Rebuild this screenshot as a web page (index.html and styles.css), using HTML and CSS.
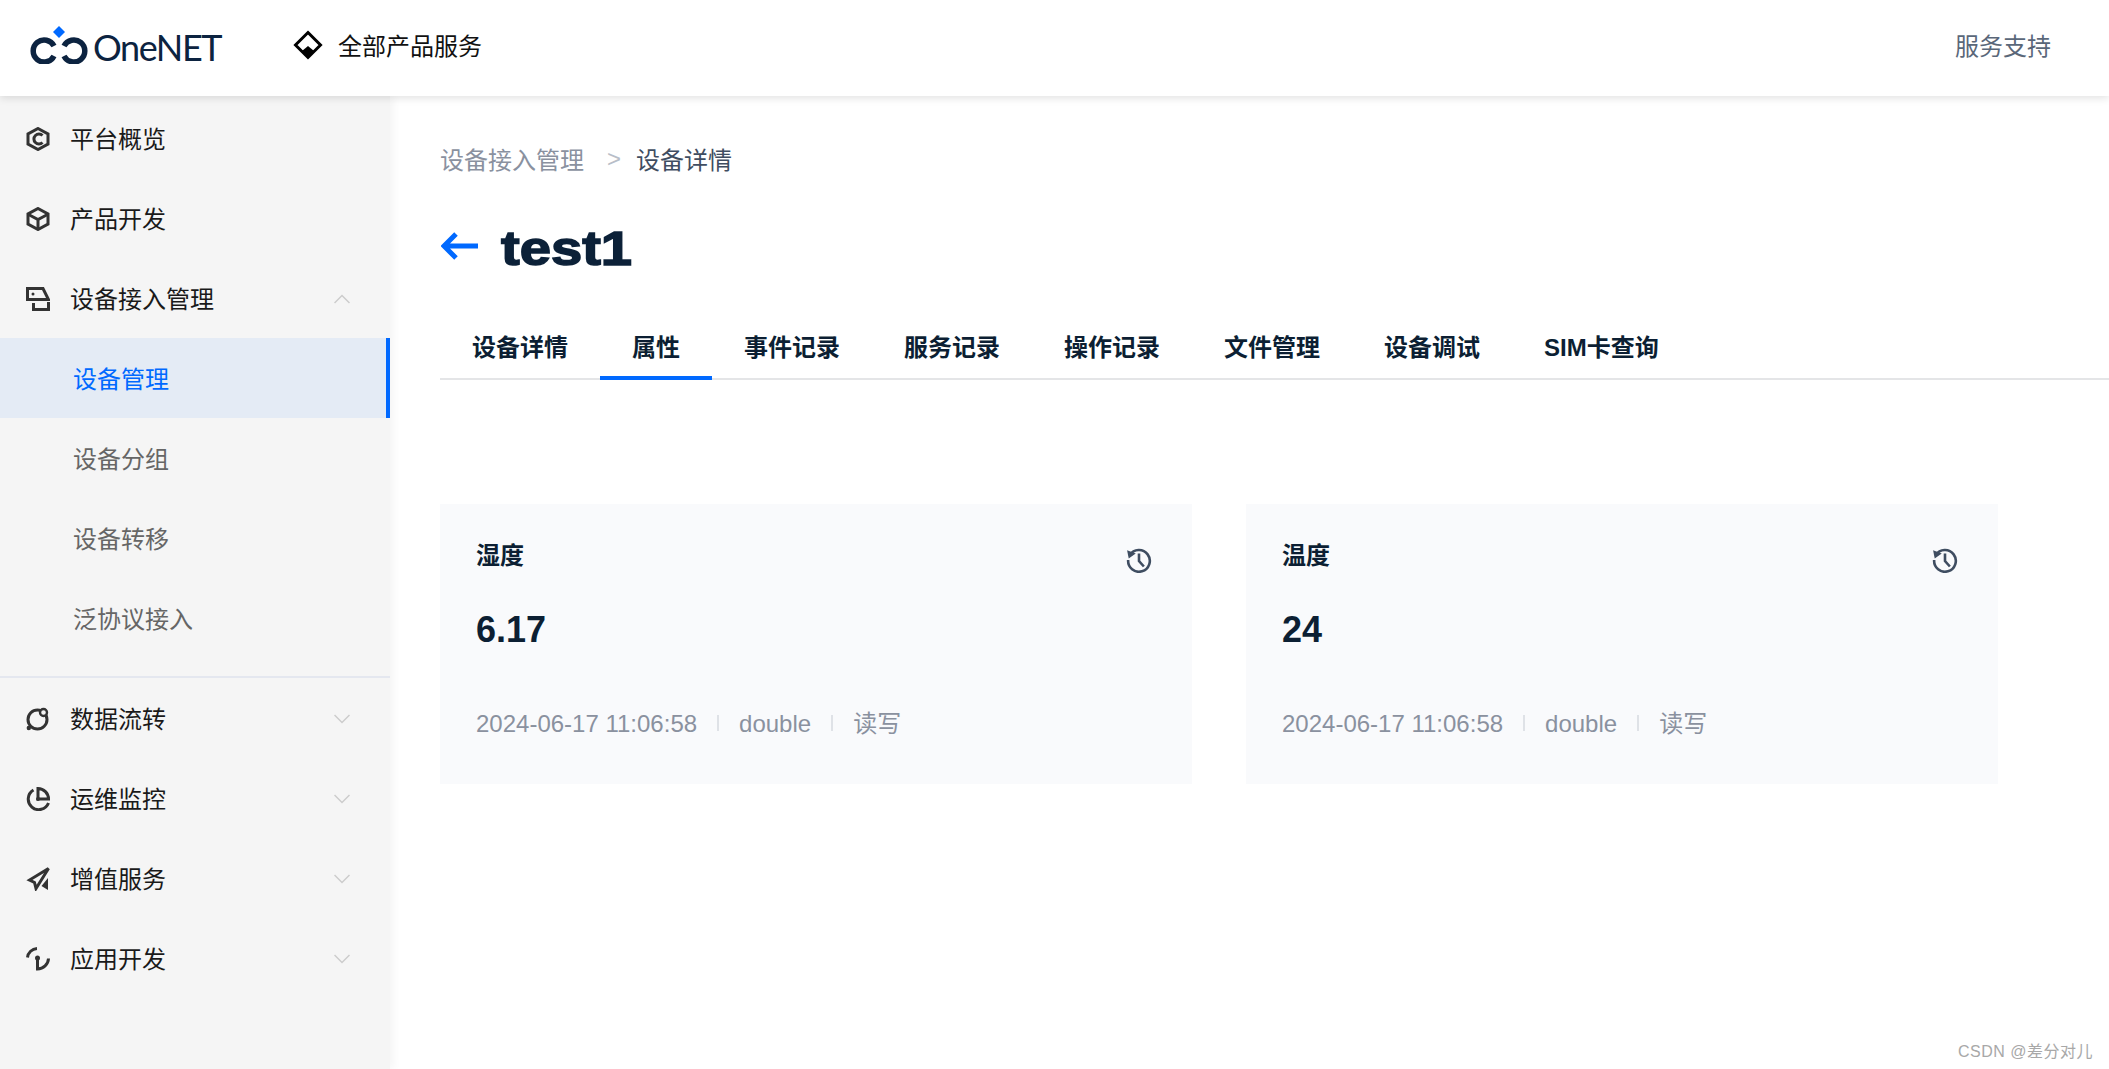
FILE: index.html
```html
<!DOCTYPE html>
<html lang="zh-CN">
<head>
    <meta charset="UTF-8">
    <title>OneNET 设备详情</title>
    <link rel="stylesheet" href="styles.css">
</head>
<body>
    <header class="topbar">
        <div class="logo">
            <svg class="logo-mark" viewBox="0 0 58 38" width="58" height="38">
                <path class="logo-blue" d="M29 0l6 6-6 6-6-6z"/>
                <path class="logo-ring" d="M24 20a11 11 0 1 0 0 10"/>
                <path class="logo-ring" d="M34 20a11 11 0 1 1 0 10"/>
            </svg>
            <span class="logo-text">OneNET</span>
        </div>
        <div class="all-products">
            <svg viewBox="0 0 30 30" width="30" height="30">
                <path class="diamond" d="M15 2.500L27.500 15 15 27.500 2.500 15z"/>
                <path d="M9 21l6-5 6 5-6 6.500z"/>
            </svg>
            <span>全部产品服务</span>
        </div>
        <a class="support">服务支持</a>
    </header>

    <div class="layout">
        <nav class="sidebar">
            <div class="nav-group">
                <div class="nav-item">
                    <svg class="nav-icon" viewBox="0 0 24 24"><path d="M12 1.500l10 5.500v10l-10 5.500-10-5.500V7z"/><path d="M16.500 8.500a5 5 0 1 0 0 7" /></svg>
                    <span>平台概览</span>
                </div>
                <div class="nav-item">
                    <svg class="nav-icon" viewBox="0 0 24 24"><path d="M12 1.500l10 5.500v10l-10 5.500-10-5.500V7z"/><path d="M2.500 7.500L12 12.500l9.500-5M12 12.500V22"/></svg>
                    <span>产品开发</span>
                </div>
                <div class="nav-item">
                    <svg class="nav-icon" viewBox="0 0 24 24"><path d="M1.500 12.500V1.500H17l5.500 11z"/><path d="M7.500 16v6.500h15V15"/><circle class="fill" cx="7" cy="7" r="1.500"/></svg>
                    <span>设备接入管理</span>
                    <svg class="chevron" viewBox="0 0 16 10"><path d="M.5 9L8 1.500 15.500 9"/></svg>
                </div>
                <div class="sub-item active">设备管理</div>
                <div class="sub-item">设备分组</div>
                <div class="sub-item">设备转移</div>
                <div class="sub-item">泛协议接入</div>
            </div>
            <div class="nav-group">
                <div class="nav-item">
                    <svg class="nav-icon" viewBox="0 0 24 24"><circle cx="11.500" cy="12.500" r="9.500"/><circle class="spot" cx="17.500" cy="5.500" r="3.500"/><circle class="fill" cx="2.800" cy="21" r="2.200"/></svg>
                    <span>数据流转</span>
                    <svg class="chevron" viewBox="0 0 16 10"><path d="M.5 1L8 8.500 15.500 1"/></svg>
                </div>
                <div class="nav-item">
                    <svg class="nav-icon" viewBox="0 0 24 24"><path d="M7.500 3A10.500 10.500 0 1 0 22.500 16"/><path d="M12 12V1.500A10.500 10.500 0 0 1 22.500 12z"/><circle class="fill" cx="12" cy="12" r="2"/></svg>
                    <span>运维监控</span>
                    <svg class="chevron" viewBox="0 0 16 10"><path d="M.5 1L8 8.500 15.500 1"/></svg>
                </div>
                <div class="nav-item">
                    <svg class="nav-icon" viewBox="0 0 24 24"><path d="M22.500 1.500L3.500 13l5 2.500 1.500 6z"/><path class="fill" d="M22 11v12l-6.500-4z"/></svg>
                    <span>增值服务</span>
                    <svg class="chevron" viewBox="0 0 16 10"><path d="M.5 1L8 8.500 15.500 1"/></svg>
                </div>
                <div class="nav-item">
                    <svg class="nav-icon" viewBox="0 0 24 24"><path d="M1.500 10.500a10 10 0 0 1 9.500-9"/><path d="M11.500 12v10a11 11 0 0 0 11-10.500"/><circle class="fill" cx="11.500" cy="11" r="2.500"/></svg>
                    <span>应用开发</span>
                    <svg class="chevron" viewBox="0 0 16 10"><path d="M.5 1L8 8.500 15.500 1"/></svg>
                </div>
            </div>
        </nav>

        <main class="content">
            <div class="breadcrumb">
                <span class="crumb">设备接入管理</span>
                <span class="crumb-sep">&gt;</span>
                <span class="crumb-now">设备详情</span>
            </div>
            <div class="title-row">
                <svg class="back" viewBox="0 0 38 28" width="38" height="28"><path d="M37 14H3M15 2L3 14l12 12"/></svg>
                <h1>test1</h1>
            </div>
            <div class="tabs">
                <div class="tab">设备详情</div>
                <div class="tab active">属性</div>
                <div class="tab">事件记录</div>
                <div class="tab">服务记录</div>
                <div class="tab">操作记录</div>
                <div class="tab">文件管理</div>
                <div class="tab">设备调试</div>
                <div class="tab">SIM卡查询</div>
            </div>
            <div class="cards">
                <div class="card">
                    <div class="card-head">
                        <span class="card-name">湿度</span>
                        <svg class="history" viewBox="0 0 24 24"><path d="M3.500 7.500A10 10 0 1 1 2 12"/><path class="fill" d="M1 3l8 3-6.500 4.500z"/><path d="M12 6v7l4.500 5"/></svg>
                    </div>
                    <div class="card-value">6.17</div>
                    <div class="card-meta">
                        <span>2024-06-17 11:06:58</span><i></i><span>double</span><i></i><span>读写</span>
                    </div>
                </div>
                <div class="card">
                    <div class="card-head">
                        <span class="card-name">温度</span>
                        <svg class="history" viewBox="0 0 24 24"><path d="M3.500 7.500A10 10 0 1 1 2 12"/><path class="fill" d="M1 3l8 3-6.500 4.500z"/><path d="M12 6v7l4.500 5"/></svg>
                    </div>
                    <div class="card-value">24</div>
                    <div class="card-meta">
                        <span>2024-06-17 11:06:58</span><i></i><span>double</span><i></i><span>读写</span>
                    </div>
                </div>
            </div>
        </main>
    </div>

    <div class="watermark">CSDN @差分对儿</div>
</body>
</html>
```

FILE: styles.css
```css
* {
    box-sizing: border-box;
}
body {
    margin: 0;
    height: 1069px;
    overflow: hidden;
    background: #ffffff;
    font-family: "Liberation Sans", "Noto Sans CJK SC", sans-serif;
    font-size: 24px;
    color: #0c1f33;
}
.topbar {
    position: relative;
    z-index: 2;
    display: flex;
    align-items: center;
    height: 96px;
    padding: 0 58px 7px 30px;
    background: #ffffff;
    box-shadow: 0 2px 8px rgba(0, 0, 0, 0.12);
}
.logo {
    display: flex;
    align-items: center;
    width: 263px;
}
.logo-blue {
    fill: #0069ff;
}
.logo-ring {
    fill: none;
    stroke: #0c2340;
    stroke-width: 5.500;
}
.logo-text {
    margin: 4px 0 0 5px;
    font-family: "Lato", sans-serif;
    font-size: 36px;
    letter-spacing: -1.400px;
    color: #0c2340;
}
.all-products {
    display: flex;
    align-items: center;
    gap: 15px;
    color: #111111;
}
.diamond {
    fill: none;
    stroke: #000000;
    stroke-width: 3;
}
.support {
    margin-left: auto;
    color: #5a6779;
}
.layout {
    display: flex;
    height: 973px;
}
.sidebar {
    flex: none;
    width: 390px;
    padding-top: 2px;
    background: #f5f5f5;
    box-shadow: 4px 0 8px rgba(0, 0, 0, 0.04);
}
.nav-group + .nav-group {
    margin-top: 18px;
    border-top: 2px solid #e4e7ef;
}
.nav-item {
    display: flex;
    align-items: center;
    height: 80px;
    padding: 2px 40px 0 26px;
    color: #1a1a1a;
}
.nav-item span {
    margin-bottom: 3px;
}
.nav-icon {
    flex: none;
    width: 24px;
    height: 24px;
    margin-right: 20px;
    fill: none;
    stroke: #333333;
    stroke-width: 3;
}
.nav-icon .fill {
    fill: #333333;
    stroke: none;
}
.nav-icon .spot {
    fill: #f5f5f5;
    stroke-width: 2.400;
}
.chevron {
    width: 16px;
    height: 10px;
    margin-left: auto;
    fill: none;
    stroke: #cccccc;
    stroke-width: 1.500;
}
.sub-item {
    height: 80px;
    padding-left: 73px;
    line-height: 84px;
    color: #666666;
}
.sub-item.active {
    border-right: 4px solid #0069ff;
    background: #e4ebf5;
    color: #0069ff;
}
.content {
    flex: 1;
    padding: 46px 0 0 50px;
}
.breadcrumb {
    display: flex;
    align-items: center;
    height: 32px;
}
.crumb {
    color: #8a919f;
}
.crumb-sep {
    margin: 2px 15px 0 23px;
    color: #b8bec8;
}
.crumb-now {
    color: #3f4d61;
}
.title-row {
    display: flex;
    align-items: center;
    height: 60px;
    margin-top: 44px;
}
.back {
    margin: 0 0 4px 1px;
    fill: none;
    stroke: #0069ff;
    stroke-width: 5;
}
h1 {
    margin: 0 0 0 22px;
    font-size: 48px;
    font-weight: bold;
    color: #0c2138;
    -webkit-text-stroke: 1.500px #0c2138;
    transform: scaleX(1.170);
    transform-origin: left center;
}
.tabs {
    display: flex;
    height: 64px;
    margin-top: 38px;
    border-bottom: 2px solid #e4e5e7;
}
.tab {
    height: 64px;
    padding: 0 32px;
    line-height: 64px;
    font-weight: bold;
    color: #0c1f33;
}
.tab.active {
    border-bottom: 4px solid #0069ff;
}
.cards {
    display: flex;
    gap: 54px;
    margin-top: 124px;
}
.card {
    width: 752px;
    height: 280px;
    padding: 36px 36px 0;
    background: #f9fafc;
}
.card-head {
    display: flex;
    justify-content: space-between;
    height: 32px;
}
.card-name {
    line-height: 32px;
    font-weight: bold;
    color: #0c1f33;
}
.history {
    width: 26px;
    height: 26px;
    margin: 7px 4px 0 0;
    fill: none;
    stroke: #3f4d61;
    stroke-width: 2.400;
}
.history .fill {
    fill: #3f4d61;
    stroke: none;
}
.card-value {
    margin-top: 37px;
    height: 42px;
    line-height: 42px;
    font-size: 36px;
    font-weight: bold;
    color: #0c1f33;
}
.card-meta {
    display: flex;
    align-items: baseline;
    margin-top: 53px;
    height: 32px;
    color: #8a919f;
}
.card-meta i {
    align-self: center;
    width: 2px;
    height: 16px;
    margin: 6px 20px 0;
    background: #dfe2e7;
}
.watermark {
    position: absolute;
    right: 16px;
    bottom: 7px;
    font-size: 16px;
    letter-spacing: 0.500px;
    color: #a8a8a8;
}
```
